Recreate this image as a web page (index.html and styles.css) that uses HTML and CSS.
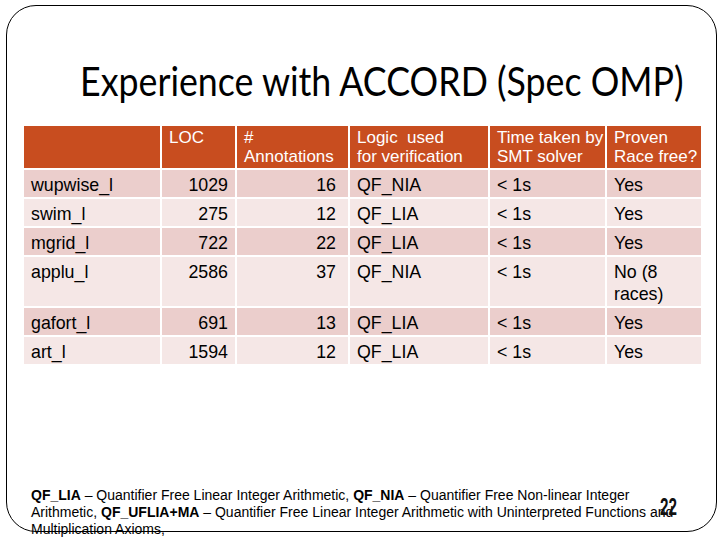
FILE: index.html
```html
<!DOCTYPE html>
<html>
<head>
<meta charset="utf-8">
<link rel="stylesheet" href="styles.css">
</head>
<body>
<div class="slide">
  <h1 class="title">Experience with ACCORD (Spec OMP)</h1>
  <table class="results">
    <colgroup>
      <col class="c1"><col class="c2"><col class="c3"><col class="c4"><col class="c5"><col class="c6">
    </colgroup>
    <thead>
      <tr>
        <th></th>
        <th>LOC</th>
        <th>#<br>Annotations</th>
        <th>Logic&nbsp; used<br>for verification</th>
        <th>Time taken by<br>SMT solver</th>
        <th>Proven<br>Race free?</th>
      </tr>
    </thead>
    <tbody>
      <tr class="odd"><td>wupwise_l</td><td class="num">1029</td><td class="num ann">16</td><td>QF_NIA</td><td>&lt; 1s</td><td>Yes</td></tr>
      <tr class="even"><td>swim_l</td><td class="num">275</td><td class="num ann">12</td><td>QF_LIA</td><td>&lt; 1s</td><td>Yes</td></tr>
      <tr class="odd"><td>mgrid_l</td><td class="num">722</td><td class="num ann">22</td><td>QF_LIA</td><td>&lt; 1s</td><td>Yes</td></tr>
      <tr class="even tall"><td>applu_l</td><td class="num">2586</td><td class="num ann">37</td><td>QF_NIA</td><td>&lt; 1s</td><td>No (8<br>races)</td></tr>
      <tr class="odd"><td>gafort_l</td><td class="num">691</td><td class="num ann">13</td><td>QF_LIA</td><td>&lt; 1s</td><td>Yes</td></tr>
      <tr class="even"><td>art_l</td><td class="num">1594</td><td class="num ann">12</td><td>QF_LIA</td><td>&lt; 1s</td><td>Yes</td></tr>
    </tbody>
  </table>
  <div class="notes">
    <p><b>QF_LIA</b> – Quantifier Free Linear Integer Arithmetic, <b>QF_NIA</b> – Quantifier Free Non-linear Integer Arithmetic, <b>QF_UFLIA+MA</b> – Quantifier Free Linear Integer Arithmetic with Uninterpreted Functions and Multiplication Axioms,</p>
    <p><b>QF_UFNIA</b> – Quantifier Free Non-linear Integer Arithmetic with Uninterpreted Functions</p>
  </div>
  <div class="pagenum">22</div>
</div>
</body>
</html>
```
FILE: styles.css
```css
html, body {
  margin: 0;
  padding: 0;
  background: #ffffff;
  width: 720px;
  height: 540px;
  overflow: hidden;
}

.slide {
  position: relative;
  box-sizing: border-box;
  width: 711px;
  height: 527px;
  margin: 5px 0 0 6px;
  border: 1px solid #000;
  border-radius: 30px;
  display: flex;
  flex-direction: column;
}

.title {
  margin: 51px 0 0 73px;
  font-family: Lato, "Open Sans", sans-serif;
  font-weight: normal;
  font-size: 40px;
  line-height: 48px;
  color: #000;
  white-space: nowrap;
  transform: scaleX(0.894);
  transform-origin: left center;
}

.results {
  margin: 19px 0 0 15px;
  border-collapse: separate;
  border-spacing: 2px;
  table-layout: fixed;
  width: 681px;
  font-family: "Liberation Sans", Arial, sans-serif;
  color: #000;
}

.c1 { width: 136px; }
.c2 { width: 73px; }
.c3 { width: 111px; }
.c4 { width: 138px; }
.c5 { width: 115px; }
.c6 { width: 94px; }

.results th {
  background: #c84d1f;
  color: #ffffff;
  font-weight: normal;
  font-size: 17px;
  line-height: 19px;
  text-align: left;
  vertical-align: top;
  height: 42px;
  box-sizing: border-box;
  padding: 2px 4px 0 7px;
  white-space: nowrap;
}

.results td {
  font-size: 17.8px;
  line-height: 22px;
  vertical-align: top;
  height: 27px;
  box-sizing: border-box;
  padding: 4px 6px 0 7px;
  white-space: nowrap;
}

.results tr.tall td { height: 49px; }

.results tr.odd td { background: #ebcecc; }
.results tr.even td { background: #f5e7e6; }

.results td.num { text-align: right; padding-right: 7px; }
.results td.ann { padding-right: 12px; }

.notes {
  margin: 121px 0 0 24px;
  width: 650px;
  font-family: "Liberation Sans", Arial, sans-serif;
  font-size: 14px;
  line-height: 17px;
  color: #000;
}

.notes p { margin: 0; }

.pagenum {
  position: absolute;
  left: 653px;
  top: 488px;
  font-family: "Liberation Sans", Arial, sans-serif;
  font-size: 23px;
  font-weight: bold;
  color: #111;
  transform: scaleX(0.66);
  transform-origin: left top;
}
```
